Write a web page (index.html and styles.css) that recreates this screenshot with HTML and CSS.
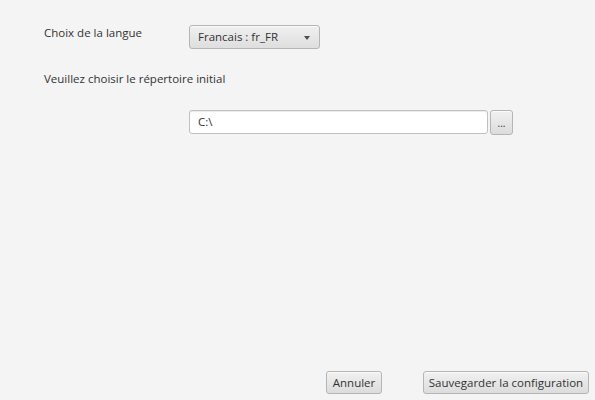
FILE: index.html
```html
<!DOCTYPE html>
<html lang="fr">
<head>
<meta charset="utf-8">
<title>Configuration</title>
<link rel="stylesheet" href="styles.css">
</head>
<body>
<div class="window">
  <div class="row lang-row">
    <span class="label">Choix de la langue</span>
    <div class="combo">
      <span class="combo-text">Francais : fr_FR</span>
      <span class="arrow"></span>
    </div>
  </div>
  <div class="row dir-label">
    <span class="label">Veuillez choisir le répertoire initial</span>
  </div>
  <div class="row dir-row">
    <div class="field">C:\</div>
    <button class="btn browse">...</button>
  </div>
  <div class="footer">
    <button class="btn cancel">Annuler</button>
    <button class="btn save">Sauvegarder la configuration</button>
  </div>
</div>
</body>
</html>
```

FILE: styles.css
```css
html, body {
  margin: 0;
  padding: 0;
}
body {
  background: #f4f4f4;
  font-family: "Open Sans", "Noto Sans", sans-serif;
  font-size: 11.5px;
  color: #333333;
}
.window {
  width: 595px;
  height: 400px;
  box-sizing: border-box;
  display: flex;
  flex-direction: column;
  padding: 25px 6px 6px 44px;
}
.row {
  display: flex;
  align-items: flex-start;
}
.label {
  line-height: 16px;
  display: block;
}
.lang-row .label {
  width: 145px;
}
.combo {
  width: 131px;
  height: 24px;
  box-sizing: border-box;
  border: 1px solid #b5b5b5;
  border-radius: 3px;
  background: linear-gradient(#f0f0f0, #dedede);
  box-shadow: inset 0 1px 0 #fafafa;
  display: flex;
  align-items: center;
  padding: 0 0 0 8px;
}
.combo-text {
  flex: 1;
  line-height: 16px;
}
.arrow {
  width: 0;
  height: 0;
  border-left: 3.5px solid transparent;
  border-right: 3.5px solid transparent;
  border-top: 4px solid #4d4d4d;
  margin-right: 9px;
  margin-top: 1px;
}
.dir-label {
  margin-top: 22px;
}
.dir-row {
  margin-top: 23px;
  padding-left: 145px;
  align-items: flex-start;
}
.field {
  width: 299px;
  height: 24px;
  box-sizing: border-box;
  border: 1px solid #c0c0c0;
  border-radius: 3px;
  background: #ffffff;
  box-shadow: inset 0 1px 0 #ececec;
  padding: 0 8px;
  line-height: 22px;
}
.btn {
  font-family: inherit;
  font-size: inherit;
  color: #333333;
  box-sizing: border-box;
  border: 1px solid #b5b5b5;
  border-radius: 3px;
  background: linear-gradient(#f1f1f1, #dcdcdc);
  box-shadow: inset 0 1px 0 #fbfbfb;
  padding: 0;
  margin: 0;
  line-height: 16px;
}
.browse {
  width: 23px;
  height: 25px;
  margin-left: 2px;
  font-size: 10px;
  padding-top: 1px;
}
.footer {
  margin-top: auto;
  display: flex;
  justify-content: flex-end;
  gap: 41px;
}
.cancel {
  width: 56px;
  height: 23px;
}
.save {
  width: 166px;
  height: 23px;
}
```
